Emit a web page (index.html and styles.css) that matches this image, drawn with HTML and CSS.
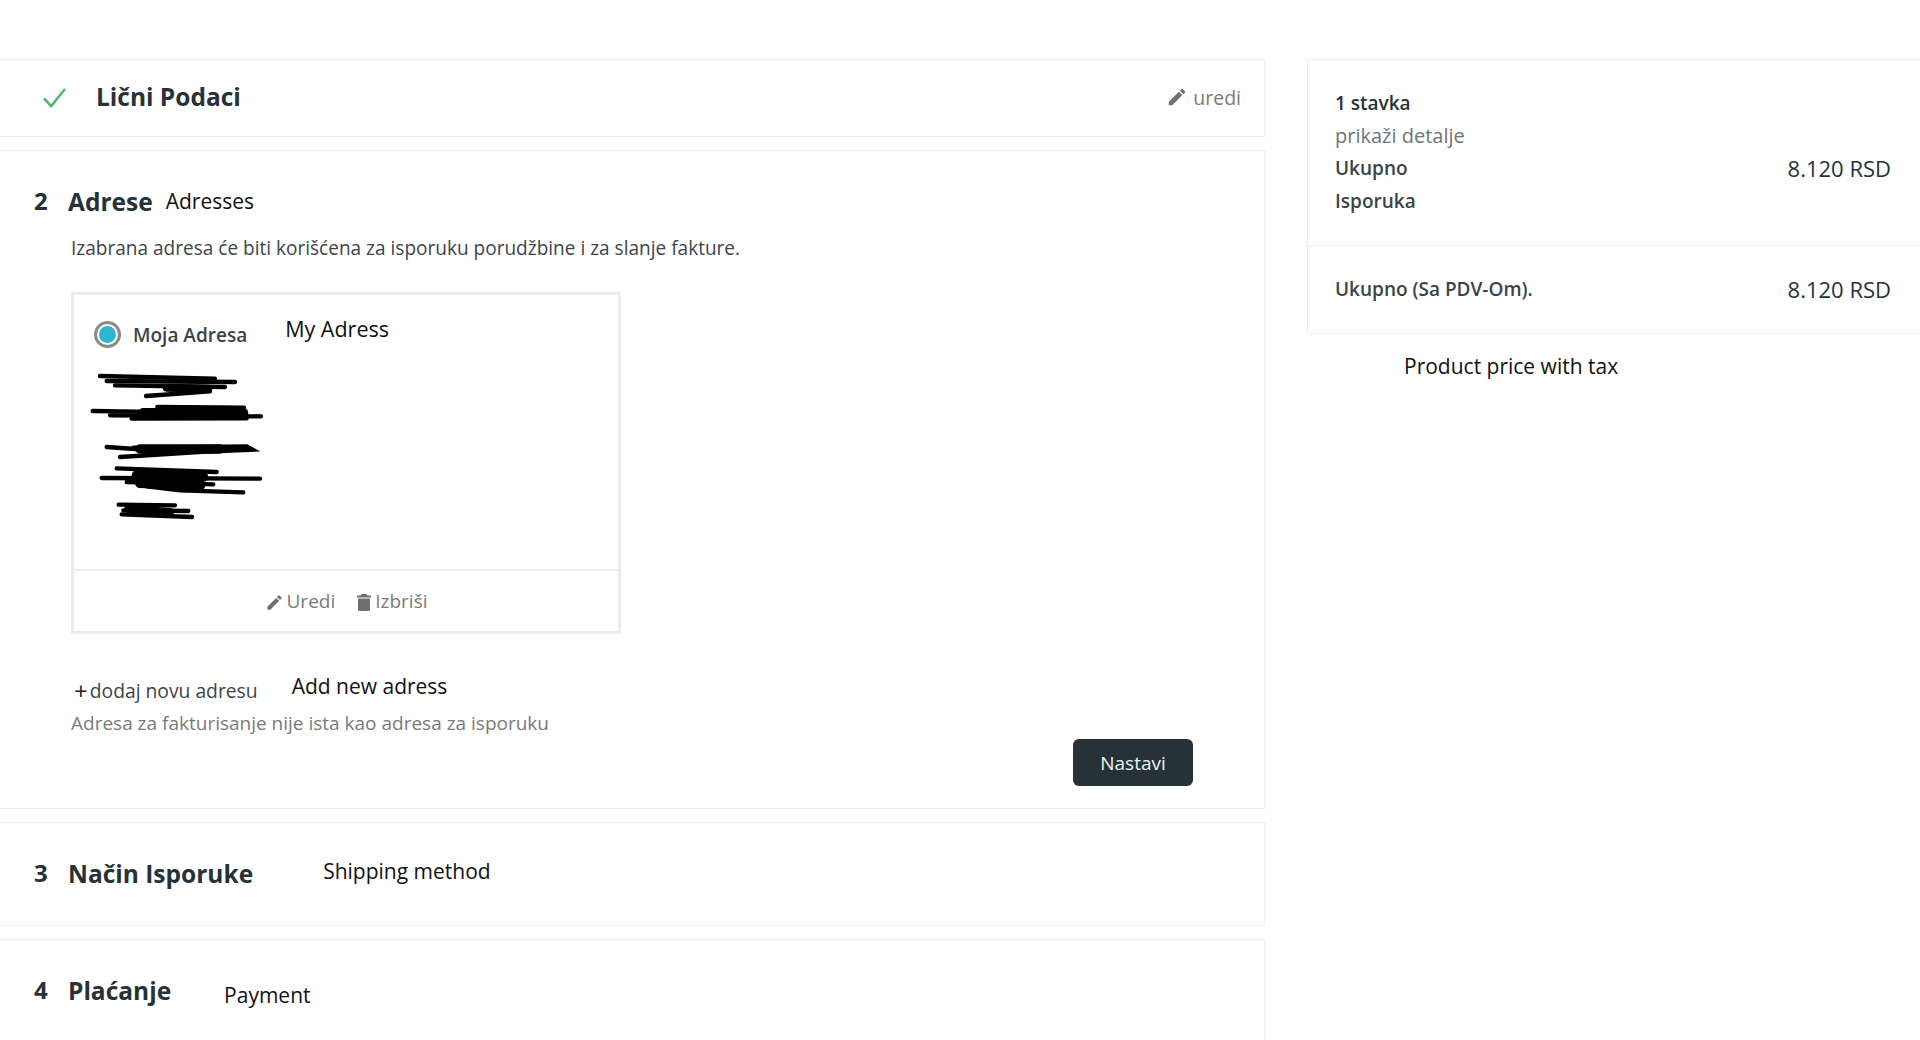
FILE: index.html
```html
<!DOCTYPE html>
<html lang="sr">
<head>
<meta charset="utf-8">
<title>Porudžbina</title>
<link rel="stylesheet" href="styles.css">
</head>
<body>
<main class="page">
  <div class="steps">
    <section class="step step-done">
      <svg class="check" viewBox="0 0 26 22"><path d="M2 12 L9.5 20 L24 2" fill="none" stroke="#4cb76c" stroke-width="2.6"/></svg>
      <h2 class="done-title">Lični Podaci</h2>
      <a class="edit-link">
        <svg class="pen" viewBox="0 0 24 24"><path d="M3 17.25V21h3.75L17.81 9.94l-3.75-3.75L3 17.25zM20.71 7.04a1 1 0 0 0 0-1.41l-2.34-2.34a1 1 0 0 0-1.41 0l-1.83 1.83 3.75 3.75 1.83-1.83z"/></svg>
        uredi
      </a>
    </section>

    <section class="step step-address">
      <header class="step-head head-address">
        <span class="num">2</span>
        <h2 class="title">Adrese</h2>
        <span class="note note-adresses">Adresses</span>
      </header>
      <p class="intro">Izabrana adresa će biti korišćena za isporuku porudžbine i za slanje fakture.</p>

      <article class="addr-card">
        <div class="addr-body">
          <div class="addr-head">
            <span class="radio"><span class="radio-dot"></span></span>
            <span class="addr-name">Moja Adresa</span>
            <span class="note note-my">My Adress</span>
          </div>
          <svg class="scribble" viewBox="0 170 600 480" fill="none" stroke="#000" stroke-linecap="round">
            <g stroke-width="13">
              <path d="M60 197 L405 205"/><path d="M80 212 L465 215"/><path d="M105 225 L435 230"/><path d="M198 257 L390 243"/><path d="M260 232 L385 235" stroke-width="24"/>
              <path d="M232 290 L492 292"/><path d="M38 302 L300 306"/><path d="M90 315 L543 318"/><path d="M155 325 L500 324"/><path d="M190 308 L490 308" stroke-width="30"/>
              <path d="M80 410 L250 422"/><path d="M160 412 L500 408 L518 418 L380 424 L120 440"/><path d="M180 416 L420 416" stroke-width="28"/>
              <path d="M110 474 L410 485"/><path d="M65 503 L540 505"/><path d="M140 515 L400 522"/><path d="M200 528 L300 540 L490 546"/><path d="M170 495 L370 500 M180 518 L360 526" stroke-width="30"/>
              <path d="M116 583 L285 585"/><path d="M130 600 L325 602"/><path d="M125 612 L336 620"/><path d="M145 595 L270 605" stroke-width="24"/>
            </g>
          </svg>
        </div>
        <footer class="addr-foot">
          <a class="foot-link">
            <svg class="pen pen-foot" viewBox="0 0 24 24"><path d="M3 17.25V21h3.75L17.81 9.94l-3.75-3.75L3 17.25zM20.71 7.04a1 1 0 0 0 0-1.41l-2.34-2.34a1 1 0 0 0-1.41 0l-1.83 1.83 3.75 3.75 1.83-1.83z"/></svg>Uredi
          </a>
          <a class="foot-link">
            <svg class="trash" viewBox="0 0 14 17"><path d="M4.5 0h5l1 1.5H14v2H0v-2h3.500zM1 4.500h12V15.500a1.500 1.500 0 0 1-1.500 1.500h-9A1.500 1.500 0 0 1 1 15.500z"/></svg>Izbriši
          </a>
        </footer>
      </article>

      <div class="add-row">
        <a class="add-link"><span class="plus">+</span>dodaj novu adresu</a>
        <span class="note note-add">Add new adress</span>
      </div>
      <p class="billing">Adresa za fakturisanje nije ista kao adresa za isporuku</p>
      <div class="actions"><button class="btn" type="button">Nastavi</button></div>
    </section>

    <section class="step step-ship">
      <header class="step-head">
        <span class="num">3</span>
        <h2 class="title">Način Isporuke</h2>
        <span class="note note-ship">Shipping method</span>
      </header>
    </section>

    <section class="step step-pay">
      <header class="step-head">
        <span class="num">4</span>
        <h2 class="title">Plaćanje</h2>
        <span class="note note-pay">Payment</span>
      </header>
    </section>
  </div>

  <aside class="side">
    <div class="summary">
      <div class="sum-top">
        <div class="sum-row strong">1 stavka</div>
        <div class="sum-row muted">prikaži detalje</div>
        <div class="sum-row"><span>Ukupno</span><span class="price">8.120 RSD</span></div>
        <div class="sum-row"><span>Isporuka</span></div>
      </div>
      <div class="sum-total">
        <div class="sum-row"><span>Ukupno (Sa PDV-Om).</span><span class="price">8.120 RSD</span></div>
      </div>
    </div>
    <p class="note note-tax">Product price with tax</p>
  </aside>
</main>
</body>
</html>
```

FILE: styles.css
```css
* { box-sizing: border-box; }
html, body { margin: 0; height: 100%; overflow: hidden; background: #fff; }
body { font-family: "Open Sans", "Noto Sans", sans-serif; color: #263238; font-size: 19px; }
h2, p { margin: 0; }

.page {
  display: grid;
  grid-template-columns: 1265px 613px;
  column-gap: 42px;
  padding-top: 59px;
  align-items: start;
  height: 1040px;
}

.steps { display: flex; flex-direction: column; gap: 13px; }
.step { border: 1px solid #eeeeee; border-left: 0; background: #fff; }

.step-done { display: flex; align-items: center; height: 78px; padding: 0 23px 2px 42px; }
.check { width: 25px; height: 21px; margin-right: 29px; margin-top: 1px; }
.done-title { font-size: 24.500px; font-weight: 700; line-height: 1; }
.edit-link { margin-left: auto; display: flex; align-items: center; gap: 5px; color: #7a7a7a; font-size: 19.500px; }
.pen { width: 22px; height: 22px; fill: #707070; flex: none; }

.step-address { height: 659px; padding: 0; }
.step-head { display: flex; align-items: center; height: 100%; padding-left: 34px; }
.head-address { height: auto; padding-top: 34px; }
.num { width: 34px; font-size: 24px; font-weight: 700; line-height: 32px; padding-bottom: 2px; }
.title { font-size: 24.500px; font-weight: 700; line-height: 34px; }
.note { color: #111; font-size: 21px; line-height: 28px; font-weight: 400; }
.note-adresses { margin-left: 13px; position: relative; top: -1px; }
.note-ship { margin-left: 70px; margin-bottom: 6px; }
.note-pay { margin-left: 53px; margin-top: 8px; }

.intro { margin: 15px 0 0 71px; line-height: 28px; color: #3d4548; font-size: 19.050px; }

.addr-card {
  width: 550px;
  height: 342px;
  margin: 30px 0 0 71px;
  border: 3px solid #ececec;
  display: flex;
  flex-direction: column;
}
.addr-body { flex: 1; padding: 25px 0 0 20px; }
.addr-head { display: flex; align-items: center; }
.radio {
  width: 27px; height: 27px; border-radius: 50%;
  border: 3px solid #8a8a8a; background: #fff;
  display: flex; align-items: center; justify-content: center;
  flex: none;
}
.radio-dot { width: 17px; height: 17px; border-radius: 50%; background: #2fb5d2; }
.addr-name { margin-left: 12px; font-size: 19px; font-weight: 600; position: relative; top: 1px; color: #3a4448; }
.note-my { margin-left: 38px; position: relative; top: -5px; font-size: 21.500px; }
.scribble { display: block; width: 200px; height: 160px; margin: 19px 0 0 -14px; }

.addr-foot {
  height: 62px;
  border-top: 2px solid #eeeeee;
  display: flex; align-items: center; justify-content: center;
  gap: 22px;
}
.foot-link { display: flex; align-items: center; gap: 3px; color: #7a7a7a; font-size: 19px; }
.pen-foot { width: 19px; height: 19px; margin-top: 3px; }
.trash { width: 14px; height: 17px; fill: #707070; margin-top: 3px; margin-right: 1px; }

.add-row { display: flex; align-items: center; margin: 42px 0 0 74px; }
.add-link { display: flex; align-items: center; color: #3d4548; font-size: 19.300px; line-height: 27px; }
.plus { font-size: 24px; margin-right: 2px; line-height: 27px; color: #232323; }
.note-add { margin-left: 34px; position: relative; top: -4px; }
.billing { margin: 6px 0 0 71px; color: #7a7a7a; line-height: 27px; }
.actions { display: flex; justify-content: flex-end; padding-right: 71px; margin-top: 2px; }
.btn {
  width: 120px; height: 47px;
  background: #263238; color: #eef2f3;
  border: 0; border-radius: 6px;
  font: 400 19px "Open Sans", sans-serif;
}

.step-ship { height: 104px; }
.step-pay { height: 140px; padding-top: 0; }
.step-pay .step-head { height: 102px; }

.side { display: flex; flex-direction: column; }
.summary { border: 1px solid #eeeeee; border-right: 0; height: 275px; display: flex; flex-direction: column; }
.sum-top { height: 186px; padding: 27px 29px 0 27px; border-bottom: 1px solid #eeeeee; }
.sum-row { display: flex; justify-content: space-between; align-items: center; height: 32.500px; font-weight: 600; color: #3a4448; font-size: 19px; }
.sum-row.strong { color: #263238; }
.sum-row.muted { color: #6f7477; font-weight: 400; font-size: 20px; }
.price { font-size: 22px; font-weight: 400; color: #263238; }
.sum-total { flex: 1; display: flex; flex-direction: column; justify-content: center; padding: 0 29px 2px 27px; }
.note-tax { margin: 18px 0 0 97px; }
```
